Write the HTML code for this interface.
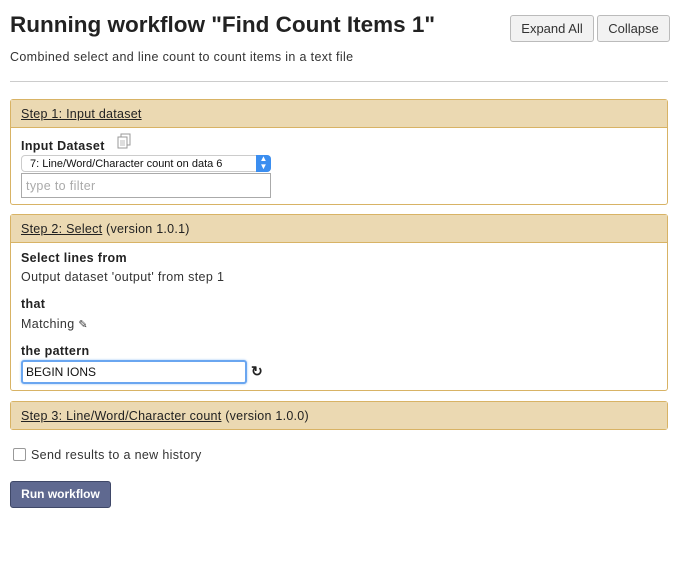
<!DOCTYPE html>
<html><head><style>
body{margin:0;width:678px;height:587px;background:#fff;font-family:"Liberation Sans",sans-serif;font-size:12px;color:#333;position:relative;overflow:hidden}
.a{position:absolute}
h1{position:absolute;left:10px;top:12px;margin:0;font-size:22.5px;font-weight:bold;color:#222}
.btn{position:absolute;top:15px;height:25px;border:1px solid #bbb;border-radius:3px;background:#f2f2f2;font-size:13px;line-height:25px;text-align:center;color:#333}
.panel{position:absolute;left:10px;width:656px;border:1px solid #d8b365;border-radius:3px;background:#fff}
.hd{background:#ebd9b2;height:27px;line-height:29px;padding-left:10px;font-size:12.5px;color:#222;letter-spacing:0.25px}
.hd u{text-decoration:underline}
.hd.b{border-bottom:1px solid #d8b365}
.t{font-size:12.5px;letter-spacing:0.35px}
</style></head><body>
<h1>Running workflow "Find Count Items 1"</h1>
<div class="a t" style="left:10px;top:50px">Combined select and line count to count items in a text file</div>
<div class="btn" style="left:510px;width:82px">Expand All</div>
<div class="btn" style="left:597px;width:71px">Collapse</div>
<div class="a" style="left:10px;top:81px;width:658px;height:1px;background:#ccc"></div>

<div class="panel" style="top:99px;height:104px">
<div class="hd b"><u>Step 1: Input dataset</u></div>
<div class="a t" style="left:10px;top:39px;font-weight:bold;color:#222">Input Dataset</div>
<svg class="a" style="left:105px;top:33px" width="16" height="16" viewBox="0 0 16 16"><rect x="5" y="1" width="9" height="11" fill="#fff" stroke="#999"/><rect x="2" y="4" width="9" height="11" fill="#fff" stroke="#999"/><path d="M4 8h5M4 10h5M4 12h5" stroke="#bbb"/></svg>
<div class="a" style="left:10px;top:55px;height:17px;border:1px solid #ccc;border-radius:4px;background:#fff;font-size:11px;line-height:17px;padding-left:8px;box-sizing:border-box;width:250px;color:#111">7: Line/Word/Character count on data 6</div>
<div class="a" style="left:245px;top:55px;width:15px;height:17px;background:#3b8ef0;border-radius:0 4px 4px 0;color:#fff;font-size:8px;line-height:8px;text-align:center">&#9650;<br>&#9660;</div>
<div class="a t" style="left:10px;top:73px;width:250px;height:25px;border:1px solid #aaa;box-sizing:border-box;color:#aaa;line-height:24px;padding-left:4px">type to filter</div>
</div>

<div class="panel" style="top:214px;height:175px">
<div class="hd b"><u>Step 2: Select</u> (version 1.0.1)</div>
<div class="a t" style="left:10px;top:36px;font-weight:bold;color:#222">Select lines from</div>
<div class="a t" style="left:10px;top:55px">Output dataset 'output' from step 1</div>
<div class="a t" style="left:10px;top:82px;font-weight:bold;color:#222">that</div>
<div class="a t" style="left:10px;top:102px">Matching <span style="font-size:11px">&#9998;</span></div>
<div class="a t" style="left:10px;top:129px;font-weight:bold;color:#222">the pattern</div>
<div class="a" style="left:10px;top:145px;width:226px;height:24px;border:2px solid #6aa6f0;border-radius:3px;box-sizing:border-box;font-size:12px;line-height:21px;padding-left:3px;color:#111;box-shadow:0 0 2px #9cc4f5">BEGIN IONS</div>
<div class="a" style="left:240px;top:148px;font-size:14px;font-weight:bold;color:#222">&#8635;</div>
</div>

<div class="panel" style="top:401px;height:27px;background:#ebd9b2">
<div class="hd"><u>Step 3: Line/Word/Character count</u> (version 1.0.0)</div>
</div>

<div class="a" style="left:13px;top:448px;width:11px;height:11px;border:1px solid #999;border-radius:2px;background:#fff"></div>
<div class="a t" style="left:31px;top:448px">Send results to a new history</div>
<div class="a" style="left:10px;top:481px;width:99px;height:25px;background:#5f6990;border:1px solid #3f4868;border-radius:3px;color:#fff;font-weight:bold;font-size:12px;line-height:25px;text-align:center">Run workflow</div>
</body></html>
